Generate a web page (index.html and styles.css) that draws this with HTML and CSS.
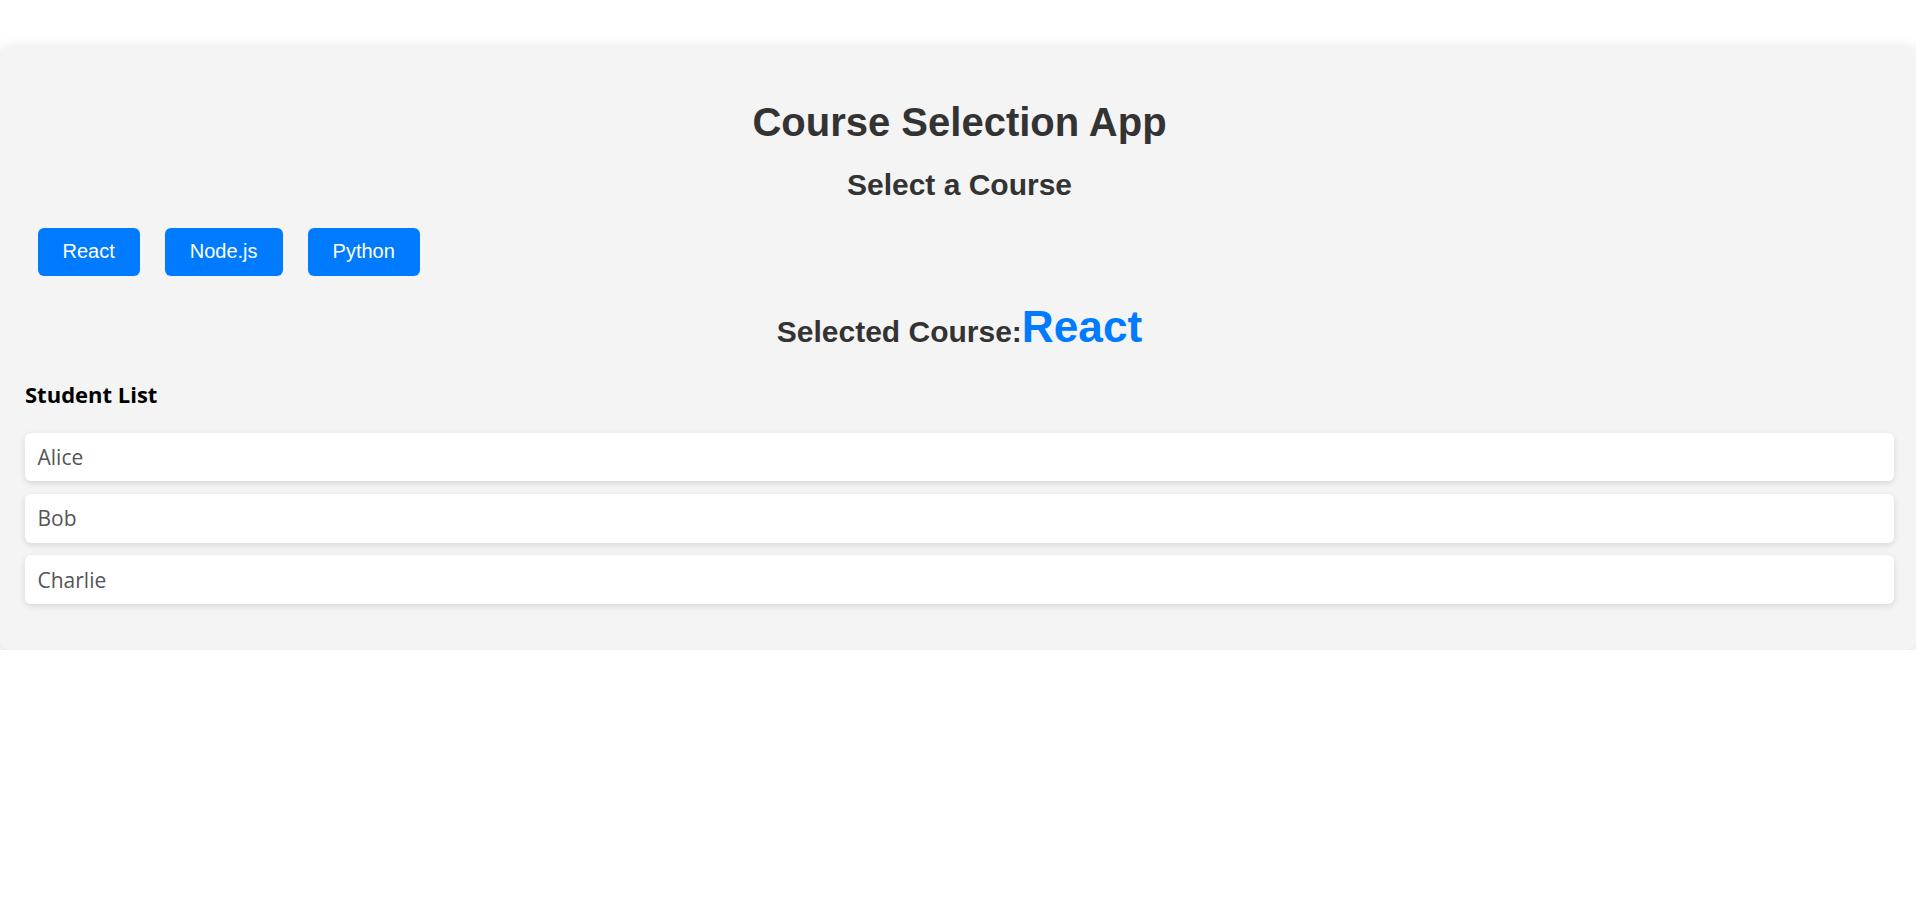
FILE: index.html
```html
<!DOCTYPE html>
<html lang="en">
<head>
<meta charset="utf-8">
<title>Course Selection App</title>
<link rel="stylesheet" href="styles.css">
</head>
<body>
<div class="app">
  <h1 class="title">Course Selection App</h1>
  <h2 class="subtitle">Select a Course</h2>
  <div class="courses">
    <button class="course-btn">React</button><button class="course-btn">Node.js</button><button class="course-btn">Python</button>
  </div>
  <h3 class="selected">Selected Course:<span class="selected-name">React</span></h3>
  <h3 class="list-title">Student List</h3>
  <ul class="students">
    <li class="student">Alice</li>
    <li class="student">Bob</li>
    <li class="student">Charlie</li>
  </ul>
</div>
</body>
</html>
```
FILE: styles.css
```css
html, body {
  margin: 0;
  padding: 0;
  background: #ffffff;
}

body {
  font-family: "Open Sans", "Noto Sans", sans-serif;
}

.app {
  margin-top: 47px;
  padding: 25px 22px 25px 25px;
  background: #f4f4f4;
  border-radius: 10px;
  box-shadow: 0 3px 16px rgba(0, 0, 0, 0.16);
}

.title {
  font-family: "Liberation Sans", Arial, sans-serif;
  font-size: 40px;
  font-weight: 700;
  color: #333333;
  text-align: center;
  margin: 26.5px 0 23.5px;
  line-height: 46px;
}

.subtitle {
  font-family: "Liberation Sans", Arial, sans-serif;
  font-size: 30px;
  font-weight: 700;
  color: #333333;
  text-align: center;
  margin: 0;
  line-height: 34.5px;
}

.courses {
  display: flex;
  margin-top: 25.2px;
}

.course-btn {
  font-family: "Liberation Sans", Arial, sans-serif;
  font-size: 20px;
  line-height: 23px;
  color: #ffffff;
  background: #007bff;
  border: none;
  border-radius: 6px;
  padding: 12.5px 25px;
  margin: 0 12.5px;
  cursor: pointer;
}

.selected {
  font-family: "Liberation Sans", Arial, sans-serif;
  font-size: 30px;
  font-weight: 700;
  color: #333333;
  text-align: center;
  margin: 26px 0 0;
}

.selected-name {
  font-size: 44.2px;
  color: #007bff;
}

.list-title {
  font-size: 22px;
  font-weight: 700;
  color: #000000;
  line-height: 31px;
  margin: 27px 0 23px;
}

.students {
  list-style: none;
  margin: 0 0 21px;
  padding: 0;
}

.student {
  background: #ffffff;
  color: #555555;
  font-size: 21px;
  line-height: 23.75px;
  padding: 13.5px 12.5px 11.5px;
  margin-bottom: 12.5px;
  border-radius: 6px;
  box-shadow: 0 2px 6px rgba(0, 0, 0, 0.12);
}
```
